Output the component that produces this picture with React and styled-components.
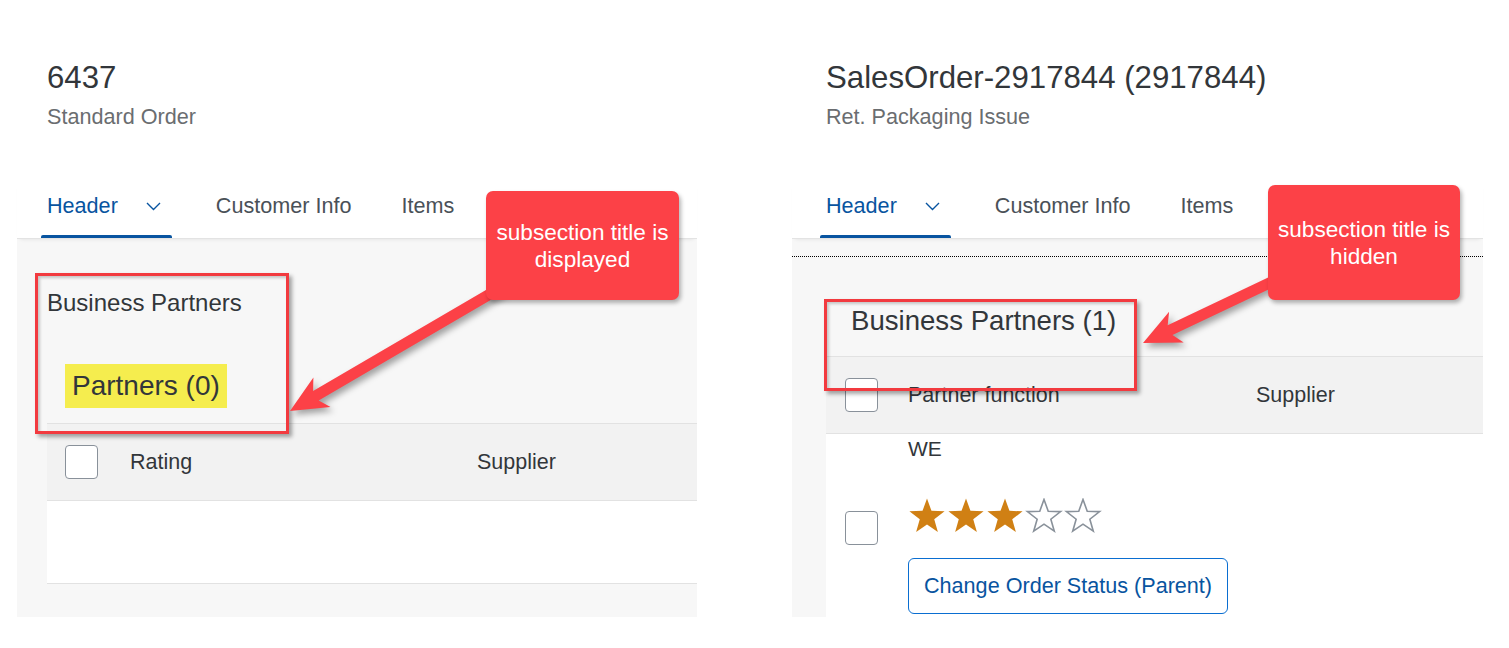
import React from 'react';
import styled, { createGlobalStyle } from 'styled-components';

// --- GLOBAL STYLES ---
const GlobalStyle = createGlobalStyle`
    body {
        margin: 0;
        background: #ffffff;
        font-family: "Liberation Sans", Arial, sans-serif;
        color: #32363a;
    }
`;

// --- Layout ---
const Page = styled.div`
    display: flex;
    gap: 95px;
    padding-left: 17px;
    height: 648px;
    overflow: hidden;
`;

const Panel = styled.section`
    position: relative;
    width: ${p => p.$width}px;
    display: flex;
    flex-direction: column;
`;

// --- Object page header ---
const ObjectHeader = styled.div`
    padding: 60px 0 0 ${p => p.$pad}px;
`;
const Title = styled.h1`
    margin: 0;
    font-size: 31.2px;
    line-height: 36px;
    font-weight: normal;
    color: #32363a;
`;
const Subtitle = styled.div`
    margin-top: 8px;
    font-size: 21.6px;
    line-height: 26px;
    color: #6a6d70;
`;

// --- Anchor bar (tabs) ---
const TabBar = styled.nav`
    display: flex;
    gap: 38px;
    margin-top: 50px;
    padding-left: ${p => p.$pad}px;
    box-shadow: 0 1px 0 #e3e3e3, 0 4px 4px -3px rgba(0, 0, 0, 0.1);
    position: relative;
    z-index: 1;
`;
const Tab = styled.div`
    position: relative;
    display: flex;
    align-items: center;
    gap: 28px;
    padding: 13px ${p => (p.$selected ? 11 : 6)}px 19px 6px;
    font-size: 21.6px;
    line-height: 26px;
    color: ${p => (p.$selected ? '#0854a0' : '#4a5158')};

    &::after {
        content: '';
        display: ${p => (p.$selected ? 'block' : 'none')};
        position: absolute;
        left: 0;
        right: 0;
        bottom: 0;
        height: 3px;
        border-radius: 2px 2px 0 0;
        background: #0854a0;
    }
`;

const Chevron = () => (
    <svg width="15" height="9" viewBox="0 0 15 9">
        <path d="M1 1 L7.5 7.5 L14 1" fill="none" stroke="#0854a0" strokeWidth="1.4" />
    </svg>
);

// --- Content area ---
const Content = styled.div`
    height: 379px;
    background: #f7f7f7;
    display: flex;
    flex-direction: column;
    overflow: hidden;
`;
const FocusLine = styled.div`
    margin-top: 18px;
    border-top: 1px dotted #000;
`;
const SectionTitle = styled.h2`
    margin: ${p => p.$top}px 0 0 ${p => p.$left}px;
    font-size: ${p => p.$size}px;
    line-height: ${p => p.$lh}px;
    font-weight: normal;
    color: #32363a;
`;
const SubsectionTitle = styled.h3`
    align-self: flex-start;
    margin: 47px 0 0 48px;
    padding: 0 7px 0 7px;
    height: 44px;
    display: flex;
    align-items: center;
    font-size: 28px;
    font-weight: normal;
    color: #32363a;
    background: #f5ed4e;
`;

// --- Table ---
const Table = styled.div`
    margin: ${p => p.$top}px 0 0 ${p => p.$left}px;
    border-top: 1px solid #e2e2e2;
    display: flex;
    flex-direction: column;
    flex: ${p => (p.$fill ? 1 : 'none')};
`;
const HeaderRow = styled.div`
    display: grid;
    grid-template-columns: ${p => p.$cols};
    align-items: center;
    height: 76px;
    background: #f2f2f2;
    border-bottom: 1px solid #e2e2e2;
    font-size: 21.5px;
    color: #32363a;
`;
const BodyRow = styled.div`
    display: grid;
    grid-template-columns: ${p => p.$cols};
    background: #ffffff;
    border-bottom: ${p => (p.$fill ? 'none' : '1px solid #e2e2e2')};
    height: ${p => (p.$fill ? 'auto' : '82px')};
    flex: ${p => (p.$fill ? 1 : 'none')};
`;
const CheckCell = styled.div`
    padding-left: ${p => p.$pad}px;
    padding-top: ${p => p.$top || 0}px;
`;
const Checkbox = styled.div`
    width: 33px;
    height: 34px;
    box-sizing: border-box;
    border: 1px solid #89919a;
    border-radius: 4px;
    background: #ffffff;
`;
const ItemCell = styled.div`
    display: flex;
    flex-direction: column;
    align-items: flex-start;
    padding-top: 2px;
`;
const CellText = styled.div`
    font-size: 21px;
    line-height: 26px;
    color: #32363a;
`;
const Stars = styled.div`
    display: flex;
    gap: 1px;
    margin-top: 36px;
`;
const Button = styled.button`
    margin-top: 24px;
    height: 56px;
    padding: 0 15px;
    border: 1.5px solid #0a6ed1;
    border-radius: 6px;
    background: #ffffff;
    color: #0854a0;
    font-family: "Liberation Sans", Arial, sans-serif;
    font-size: 21.6px;
`;

// --- Annotations (overlays) ---
const Highlight = styled.div`
    position: absolute;
    left: ${p => p.$x}px;
    top: ${p => p.$y}px;
    width: ${p => p.$w}px;
    height: ${p => p.$h}px;
    box-sizing: border-box;
    border: 3px solid #f23a3f;
    box-shadow: 3px 3px 4px rgba(0, 0, 0, 0.35), inset 2px 2px 3px rgba(0, 0, 0, 0.2);
    z-index: 2;
`;
const Callout = styled.div`
    position: absolute;
    left: ${p => p.$x}px;
    top: ${p => p.$y}px;
    width: ${p => p.$w}px;
    height: ${p => p.$h}px;
    display: flex;
    align-items: center;
    justify-content: center;
    text-align: center;
    background: #fc4147;
    border-radius: 7px;
    box-shadow: 2px 3px 4px rgba(0, 0, 0, 0.3);
    color: #ffffff;
    font-family: "Liberation Sans", Arial, sans-serif;
    font-size: 22.6px;
    line-height: 27px;
    z-index: 4;
`;
const Overlay = styled.svg`
    position: absolute;
    left: 0;
    top: 0;
    width: 100%;
    height: 100%;
    pointer-events: none;
    z-index: 3;
    overflow: visible;
    filter: drop-shadow(3px 4px 3px rgba(0, 0, 0, 0.35));
`;

function arrowPoints([x1, y1], [x2, y2], shaft = 5.5, headLen = 37, headHalf = 17, barb = 7) {
    const dx = x2 - x1, dy = y2 - y1;
    const len = Math.hypot(dx, dy);
    const ux = dx / len, uy = dy / len;
    const nx = -uy, ny = ux;
    const bx = x2 - ux * headLen, by = y2 - uy * headLen;
    const jx = x2 - ux * (headLen - barb), jy = y2 - uy * (headLen - barb);
    const pts = [
        [x1 + nx * shaft, y1 + ny * shaft],
        [jx + nx * shaft, jy + ny * shaft],
        [bx + nx * headHalf, by + ny * headHalf],
        [x2, y2],
        [bx - nx * headHalf, by - ny * headHalf],
        [jx - nx * shaft, jy - ny * shaft],
        [x1 - nx * shaft, y1 - ny * shaft],
    ];
    return pts.map(p => p.map(v => v.toFixed(1)).join(',')).join(' ');
}

const Arrow = ({ from, to }) => (
    <Overlay>
        <polygon points={arrowPoints(from, to)} fill="#fc4147" />
    </Overlay>
);

function starPoints(cx, cy, R, r) {
    const pts = [];
    for (let i = 0; i < 10; i++) {
        const a = (-90 + i * 36) * Math.PI / 180;
        const rad = i % 2 === 0 ? R : r;
        pts.push(`${(cx + rad * Math.cos(a)).toFixed(2)},${(cy + rad * Math.sin(a)).toFixed(2)}`);
    }
    return pts.join(' ');
}

const Star = ({ filled }) => (
    <svg width="38" height="36" viewBox="0 0 38 36">
        {filled ? (
            <polygon points={starPoints(19, 19, 18.5, 7.6)} fill="#d08014" />
        ) : (
            <polygon points={starPoints(19, 19, 17.5, 7.2)} fill="none" stroke="#89919a" strokeWidth="1.6" strokeLinejoin="miter" />
        )}
    </svg>
);

const ratings = [true, true, true, false, false];

export default function App() {
    return (
        <Page>
            <GlobalStyle />

            {/* --- LEFT: subsection title displayed --- */}
            <Panel $width={680}>
                <ObjectHeader $pad={30}>
                    <Title>6437</Title>
                    <Subtitle>Standard Order</Subtitle>
                </ObjectHeader>
                <TabBar $pad={24}>
                    <Tab $selected>Header<Chevron /></Tab>
                    <Tab>Customer Info</Tab>
                    <Tab>Items</Tab>
                </TabBar>
                <Content>
                    <SectionTitle $top={51} $left={30} $size={24} $lh={28}>Business Partners</SectionTitle>
                    <SubsectionTitle>Partners (0)</SubsectionTitle>
                    <Table $top={15} $left={30}>
                        <HeaderRow $cols="83px 347px 1fr">
                            <CheckCell $pad={18}><Checkbox /></CheckCell>
                            <div>Rating</div>
                            <div>Supplier</div>
                        </HeaderRow>
                        <BodyRow $cols="83px 1fr" />
                    </Table>
                </Content>

                <Highlight $x={18} $y={273} $w={254} $h={161} />
                <Arrow from={[485, 287]} to={[273, 411]} />
                <Callout $x={469} $y={191} $w={193} $h={109}>
                    subsection title is<br />displayed
                </Callout>
            </Panel>

            {/* --- RIGHT: subsection title hidden --- */}
            <Panel $width={691}>
                <ObjectHeader $pad={34}>
                    <Title>SalesOrder-2917844 (2917844)</Title>
                    <Subtitle>Ret. Packaging Issue</Subtitle>
                </ObjectHeader>
                <TabBar $pad={28}>
                    <Tab $selected>Header<Chevron /></Tab>
                    <Tab>Customer Info</Tab>
                    <Tab>Items</Tab>
                </TabBar>
                <Content>
                    <FocusLine />
                    <SectionTitle $top={48} $left={59} $size={27.6} $lh={32}>Business Partners (1)</SectionTitle>
                    <Table $top={19} $left={34} $fill>
                        <HeaderRow $cols="82px 348px 1fr">
                            <CheckCell $pad={19}><Checkbox /></CheckCell>
                            <div>Partner function</div>
                            <div>Supplier</div>
                        </HeaderRow>
                        <BodyRow $cols="82px 1fr" $fill>
                            <CheckCell $pad={19} $top={77}><Checkbox /></CheckCell>
                            <ItemCell>
                                <CellText>WE</CellText>
                                <Stars>
                                    {ratings.map((f, i) => <Star key={i} filled={f} />)}
                                </Stars>
                                <Button>Change Order Status (Parent)</Button>
                            </ItemCell>
                        </BodyRow>
                    </Table>
                </Content>

                <Highlight $x={32} $y={299} $w={313} $h={92} />
                <Arrow from={[488, 278]} to={[351, 343]} />
                <Callout $x={476} $y={185} $w={192} $h={115}>
                    subsection title is<br />hidden
                </Callout>
            </Panel>
        </Page>
    );
}
